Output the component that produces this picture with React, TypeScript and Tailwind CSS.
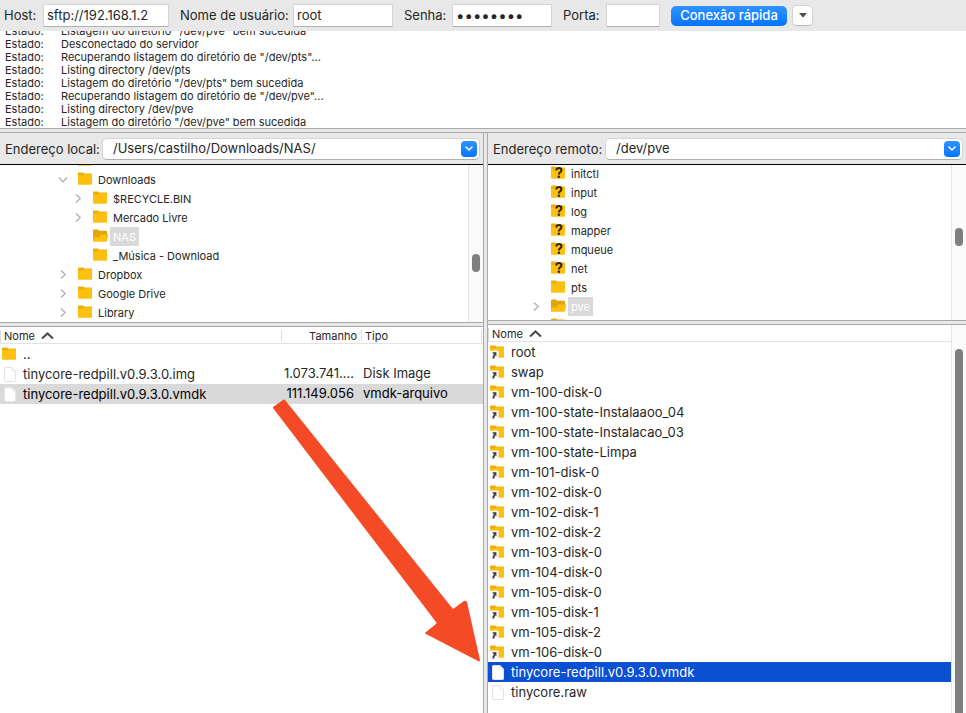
import type { ReactNode } from "react";
import clsx from "clsx";

type TreeNode = {
  name: string;
  level?: number;
  kind?: "folder" | "open" | "unknown";
  arrow?: "right" | "down";
  selected?: boolean;
};

const LOG = [
  'Listagem do diretório "/dev/pve" bem sucedida',
  "Desconectado do servidor",
  'Recuperando listagem do diretório de "/dev/pts"...',
  "Listing directory /dev/pts",
  'Listagem do diretório "/dev/pts" bem sucedida',
  'Recuperando listagem do diretório de "/dev/pve"...',
  "Listing directory /dev/pve",
  'Listagem do diretório "/dev/pve" bem sucedida',
];

const LOCAL_TREE: TreeNode[] = [
  { name: "" },
  { name: "Downloads", arrow: "down" },
  { name: "$RECYCLE.BIN", level: 1, arrow: "right" },
  { name: "Mercado Livre", level: 1, arrow: "right" },
  { name: "NAS", level: 1, kind: "open", selected: true },
  { name: "_Música - Download", level: 1 },
  { name: "Dropbox", arrow: "right" },
  { name: "Google Drive", arrow: "right" },
  { name: "Library", arrow: "right" },
];

const REMOTE_TREE: TreeNode[] = [
  { name: "initctl", kind: "unknown" },
  { name: "input", kind: "unknown" },
  { name: "log", kind: "unknown" },
  { name: "mapper", kind: "unknown" },
  { name: "mqueue", kind: "unknown" },
  { name: "net", kind: "unknown" },
  { name: "pts" },
  { name: "pve", kind: "open", arrow: "right", selected: true },
  { name: "" },
];

const REMOTE_LINKS = [
  "root",
  "swap",
  "vm-100-disk-0",
  "vm-100-state-Instalaaoo_04",
  "vm-100-state-Instalacao_03",
  "vm-100-state-Limpa",
  "vm-101-disk-0",
  "vm-102-disk-0",
  "vm-102-disk-1",
  "vm-102-disk-2",
  "vm-103-disk-0",
  "vm-104-disk-0",
  "vm-105-disk-0",
  "vm-105-disk-1",
  "vm-105-disk-2",
  "vm-106-disk-0",
];

export default function App() {
  return (
    <div className="flex h-screen flex-col overflow-hidden bg-[#e8e8e8] font-['Inter','Liberation_Sans',sans-serif] text-[13px] text-[#262626]">
      <QuickConnect />

      {/* Message log */}
      <div className="flex h-[97px] shrink-0 flex-col justify-end overflow-hidden bg-white text-[11px] leading-[15px]">
        {LOG.map((line, i) => (
          <div key={i} className="flex h-[13px] shrink-0 pl-[5px]">
            <span className="w-14">Estado:</span>
            <span>{line}</span>
          </div>
        ))}
      </div>
      <Splitter />

      <div className="flex min-h-0 flex-1">
        {/* Local side */}
        <section className="flex w-1/2 min-w-0 flex-col">
          <AddressBar id="local" label="Endereço local:" value="/Users/castilho/Downloads/NAS/" labelWidth="w-[97px]" />
          <div className="flex h-[157px] shrink-0 bg-white">
            <div className="flex min-w-0 flex-1 flex-col justify-end overflow-hidden pl-[58px]">
              {LOCAL_TREE.map((n) => (
                <TreeRow key={n.name} node={n} />
              ))}
            </div>
            <ScrollTrack>
              <div className="mt-[89px] h-[18px] w-2 rounded-full bg-[#7f7f7f]" />
            </ScrollTrack>
          </div>
          <Splitter />
          <LocalFiles />
        </section>

        <div className="w-[5px] shrink-0 border-x border-[#a9a9a9]" />

        {/* Remote side */}
        <section className="flex min-w-0 flex-1 flex-col">
          <AddressBar id="remote" label="Endereço remoto:" value="/dev/pve" labelWidth="w-[112px]" />
          <div className="flex h-[155px] shrink-0 overflow-hidden bg-white">
            <div className="-mt-px min-w-0 flex-1 pl-[43px]">
              {REMOTE_TREE.map((n) => (
                <TreeRow key={n.name} node={n} />
              ))}
            </div>
            <ScrollTrack>
              <div className="mt-[63px] h-[18px] w-2 rounded-full bg-[#7f7f7f]" />
            </ScrollTrack>
          </div>
          <Splitter />
          <RemoteFiles />
        </section>
      </div>
    </div>
  );
}

/* ===== Top bar ===== */
function QuickConnect() {
  const field = "h-[23px] border border-[#d4d4d4] border-b-[#b0b0b0] bg-white px-[3px] pb-px outline-none";
  return (
    <form className="flex h-[31px] shrink-0 items-center pl-1" onSubmit={(e) => e.preventDefault()}>
      <label htmlFor="host" className="w-[39px]">Host:</label>
      <input id="host" defaultValue="sftp://192.168.1.2" className={clsx(field, "mr-[11px] w-[126px]")} />
      <label htmlFor="user" className="w-[113px] whitespace-nowrap">Nome de usuário:</label>
      <input id="user" defaultValue="root" className={clsx(field, "mr-[11px] w-[100px]")} />
      <label htmlFor="pass" className="w-12">Senha:</label>
      <input id="pass" type="password" defaultValue="12345678" className={clsx(field, "mr-[11px] w-[100px] text-[15px]")} />
      <label htmlFor="port" className="w-[43px]">Porta:</label>
      <input id="port" className={clsx(field, "mr-[11px] w-[54px]")} />
      <button className="h-5 w-[116px] rounded-[5px] bg-linear-to-b from-[#2e93ff] to-[#0174ff] pb-px text-center leading-[19px] font-medium whitespace-nowrap text-white">
        Conexão rápida
      </button>
      <button
        type="button"
        aria-label="Histórico"
        className="ml-[5px] flex h-[21px] w-[21px] items-center justify-center rounded-[5px] border border-[#d2d2d2] border-b-[#b8b8b8] bg-white"
      >
        <svg width="8" height="5" viewBox="0 0 8 5">
          <path d="M0 0H8L4.6 4Q4 4.6 3.4 4Z" fill="#4d4d4d" />
        </svg>
      </button>
    </form>
  );
}

function AddressBar({ id, label, value, labelWidth }: { id: string; label: string; value: string; labelWidth: string }) {
  return (
    <div className="flex h-8 shrink-0 items-center border-b border-black pr-[3px] pl-[5px]">
      <label htmlFor={id} className={clsx("shrink-0 pt-0.5 whitespace-nowrap", labelWidth)}>
        {label}
      </label>
      <div className="flex h-[22px] min-w-0 flex-1 items-center rounded-[5px] border border-[#d4d4d4] border-b-[#b0b0b0] bg-white pr-[2px] pl-[10px]">
        <input id={id} defaultValue={value} className="min-w-0 flex-1 bg-transparent outline-none" />
        <button
          aria-label="Mostrar endereços"
          className="flex h-4 w-4 items-center justify-center rounded-[4px] bg-linear-to-b from-[#2e93ff] to-[#0174ff]"
        >
          <svg width="8" height="5" viewBox="0 0 8 5" fill="none">
            <path d="M1 1L4 4L7 1" stroke="#fff" strokeWidth="1.5" strokeLinecap="round" strokeLinejoin="round" />
          </svg>
        </button>
      </div>
    </div>
  );
}

/* ===== Trees ===== */
function TreeRow({ node }: { node: TreeNode }) {
  return (
    <div className={clsx("flex h-[19px] shrink-0 text-[11px] leading-[21px]", node.level === 1 && "pl-[15px]")}>
      <div className="w-5 pt-[5px]">
        {node.arrow && (
          <svg width="10" height="9" viewBox="0 0 10 9" fill="none">
            <path
              d={node.arrow === "down" ? "M1 2.5L5 6.8L9 2.5" : "M3 0.6L7.2 4.5L3 8.4"}
              stroke="#b0b0b0"
              strokeWidth="1.3"
            />
          </svg>
        )}
      </div>
      <div className="w-[17px] pt-[2px]">
        <FolderIcon kind={node.kind} />
      </div>
      <span className={clsx("px-[3px] whitespace-nowrap", node.selected && "bg-[#d9d9d9] text-white")}>
        {node.name}
      </span>
    </div>
  );
}

/* ===== File lists ===== */
function HeaderCell({ children, className }: { children?: ReactNode; className?: string }) {
  return (
    <th className="h-[17px] border-b border-[#e2e2e2] p-0 text-[11px] font-normal text-[#262626]">
      <div className={clsx("h-[11px] leading-[13px]", className)}>{children}</div>
    </th>
  );
}

function SortName() {
  return (
    <span className="flex items-center gap-1.5 border-l border-[#dcdcdc] pl-[3px]">
      Nome
      <svg width="13" height="8" viewBox="0 0 13 8" fill="none">
        <path d="M1 6.5L6.5 1.4L12 6.5" stroke="#4a4a4a" strokeWidth="2" />
      </svg>
    </span>
  );
}

function FileName({ icon, children }: { icon: ReactNode; children: ReactNode }) {
  return (
    <div className="flex h-5 pl-[2px] leading-[21px]">
      <span className="w-[21px] pt-[3px]">{icon}</span>
      <span className="whitespace-nowrap">{children}</span>
    </div>
  );
}

function LocalFiles() {
  return (
    <div className="relative min-h-0 flex-1 bg-white">
      <table className="w-full table-fixed border-separate border-spacing-0">
        <colgroup>
          <col />
          <col className="w-20" />
          <col className="w-[122px]" />
        </colgroup>
        <thead>
          <tr>
            <HeaderCell className="text-left"><SortName /></HeaderCell>
            <HeaderCell className="border-l border-[#dcdcdc] pr-1 text-right">Tamanho</HeaderCell>
            <HeaderCell className="mr-px border-x border-[#dcdcdc] pl-[3px] text-left">Tipo</HeaderCell>
          </tr>
        </thead>
        <tbody>
          <tr>
            <td className="p-0"><FileName icon={<FolderIcon />}>..</FileName></td>
            <td />
            <td />
          </tr>
          <tr>
            <td className="p-0"><FileName icon={<FileIcon />}>tinycore-redpill.v0.9.3.0.img</FileName></td>
            <td className="p-0 pr-[7px] text-right whitespace-nowrap">1.073.741.…</td>
            <td className="p-0 pl-[2px]">Disk Image</td>
          </tr>
          <tr className="bg-[#d9d9d9] text-black">
            <td className="p-0"><FileName icon={<FileIcon />}>tinycore-redpill.v0.9.3.0.vmdk</FileName></td>
            <td className="p-0 pr-[7px] text-right">111.149.056</td>
            <td className="p-0 pl-[2px]">vmdk-arquivo</td>
          </tr>
        </tbody>
      </table>

      {/* Arrow pointing at the uploaded file */}
      <svg className="pointer-events-none absolute top-[71px] right-[2px]" width="210" height="266" viewBox="0 0 210 266">
        <path
          d="M2 9L12 2Q13 1 14 2L182 211L193 203Q195 202 196 204L209 262Q209 264 207 263L155 236Q153 235 155 234L165 226Q166 225 165 224L2 10Z"
          fill="#f54a26"
        />
      </svg>
    </div>
  );
}

function RemoteFiles() {
  return (
    <div className="flex min-h-0 flex-1 bg-white">
      <div className="min-w-0 flex-1 overflow-hidden">
        <table className="w-full table-fixed border-separate border-spacing-0">
          <thead>
            <tr>
              <HeaderCell className="text-left"><SortName /></HeaderCell>
            </tr>
          </thead>
          <tbody>
            {REMOTE_LINKS.map((name) => (
              <tr key={name}>
                <td className="p-0"><FileName icon={<FolderLinkIcon />}>{name}</FileName></td>
              </tr>
            ))}
            <tr className="bg-[#0a50d0] text-white">
              <td className="p-0"><FileName icon={<FileIcon />}>tinycore-redpill.v0.9.3.0.vmdk</FileName></td>
            </tr>
            <tr>
              <td className="p-0"><FileName icon={<FileIcon />}>tinycore.raw</FileName></td>
            </tr>
          </tbody>
        </table>
      </div>
      <ScrollTrack>
        <div className="mt-6 w-2 flex-1 rounded-t-full bg-[#7f7f7f]" />
      </ScrollTrack>
    </div>
  );
}

/* ===== Small pieces ===== */
function Splitter() {
  return <div className="h-[5px] shrink-0 border-y border-[#a9a9a9]" />;
}

function ScrollTrack({ children }: { children: ReactNode }) {
  return <div className="flex w-[15px] shrink-0 flex-col border-l border-[#e4e4e4] bg-[#fafafa] pl-[3px]">{children}</div>;
}

function FolderIcon({ kind = "folder" }: { kind?: "folder" | "open" | "unknown" }) {
  if (kind === "open") {
    return (
      <svg width="16" height="14" viewBox="0 0 16 14">
        <path d="M0 1.4Q0 .6 .8 .6H5L6 1.8H13.2Q14 1.8 14 2.6V12H0Z" fill="#e3a40c" />
        <path d="M0 12.8V8.4H5.6L8 5.6H15.4L14 12Q13.8 12.8 13 12.8Z" fill="#fec010" />
      </svg>
    );
  }
  return (
    <svg width="16" height="14" viewBox="0 0 16 14">
      <path d="M0 1.4Q0 .6 .8 .6H5L6.4 1.4H13.2Q14 1.4 14 2.2V6H0Z" fill="#ecae0e" />
      <path d="M0 3.6H5.2L7 2.2H14V12Q14 12.8 13.2 12.8H.8Q0 12.8 0 12Z" fill="#fec010" />
      {kind === "unknown" && (
        <>
          <path d="M5.3 4.6Q5.3 2 7.9 2Q10.4 2 10.4 4.2Q10.4 5.6 9 6.4Q7.9 7 7.9 8.4" stroke="#33270a" strokeWidth="2.1" fill="none" />
          <circle cx="7.9" cy="10.8" r="1.3" fill="#33270a" />
        </>
      )}
    </svg>
  );
}

function FolderLinkIcon() {
  return (
    <svg width="16" height="16" viewBox="0 0 16 16">
      <path d="M0 1.4Q0 .6 .8 .6H5L6.4 1.4H13.2Q14 1.4 14 2.2V6H0Z" fill="#ecae0e" />
      <path d="M0 3.6H5.2L7 2.2H14V12Q14 12.8 13.2 12.8H0Z" fill="#fec010" />
      <path d="M0 5.6H8.6V14.4H0Z" fill="#f8f8f8" />
      <path d="M2.6 7.2H6.4V11.2L5.5 10.3Q4.4 11.6 4.2 13.4H2.4Q2.4 10.8 4.1 9L2.6 8.4Z" fill="#3d3d3d" />
    </svg>
  );
}

function FileIcon() {
  return (
    <svg width="16" height="16" viewBox="0 0 16 16">
      <path d="M2.5 1.2Q2.5 .5 3.2 .5H10L13.5 4V13.8Q13.5 14.5 12.8 14.5H3.2Q2.5 14.5 2.5 13.8Z" fill="#fff" stroke="#e2e2e2" />
      <path d="M10 .5V4H13.5" fill="none" stroke="#e8e8e8" />
    </svg>
  );
}
